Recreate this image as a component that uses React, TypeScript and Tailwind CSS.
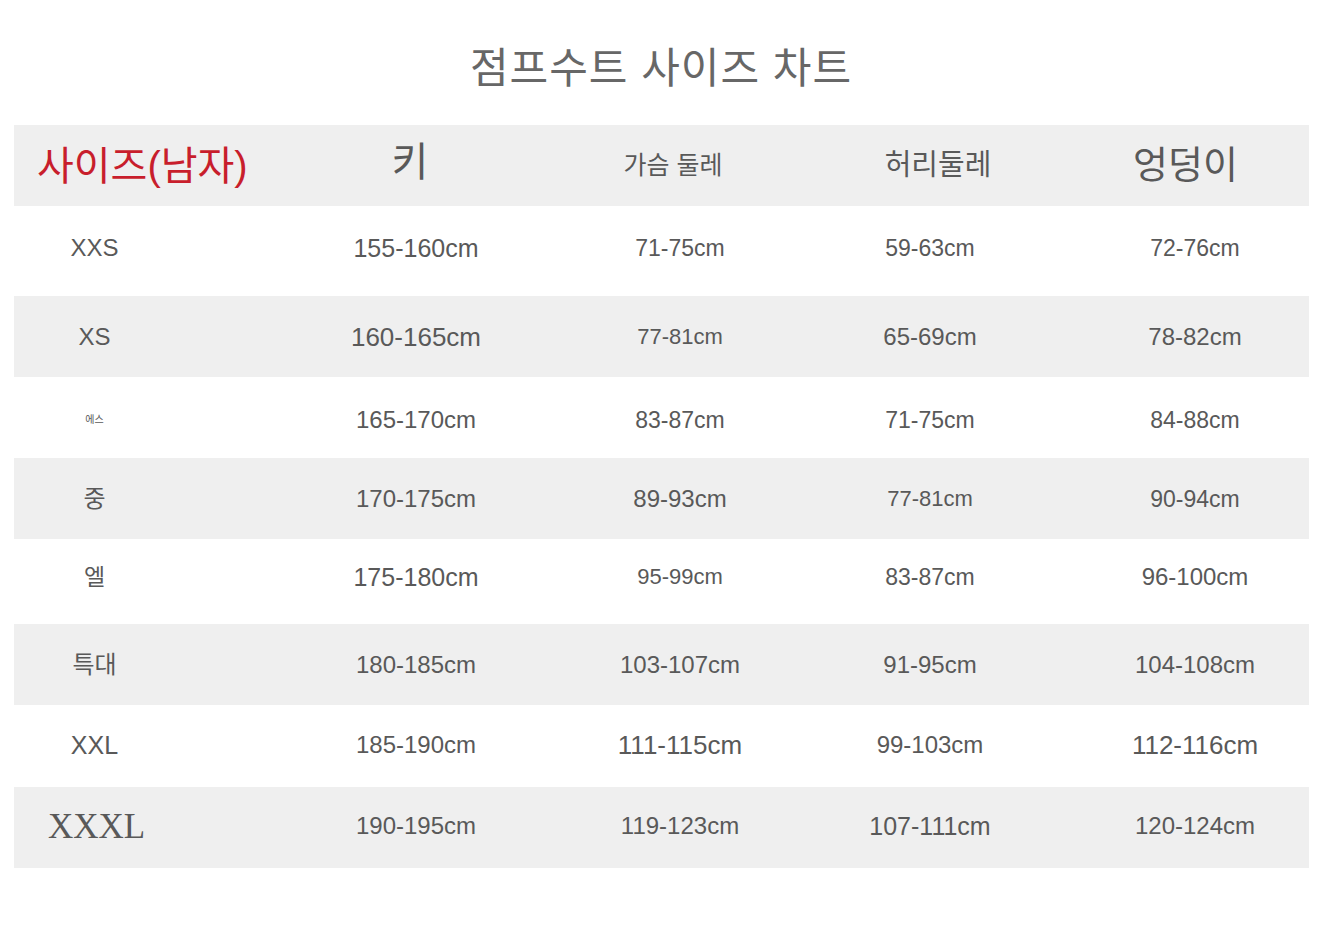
const font = { fontFamily: '"Liberation Sans", "Noto Sans CJK KR", sans-serif' }

type Cell = { text: string; size: string; serif?: boolean }

const rows: { gray: boolean; h: string; nudge: string; cells: Cell[] }[] = [
  {
    gray: false,
    h: "h-[90px]",
    nudge: "pb-[6px]",
    cells: [
      { text: "XXS", size: "text-[24px]" },
      { text: "155-160cm", size: "text-[25px]" },
      { text: "71-75cm", size: "text-[23px]" },
      { text: "59-63cm", size: "text-[23px]" },
      { text: "72-76cm", size: "text-[23px]" },
    ],
  },
  {
    gray: true,
    h: "h-[81px]",
    nudge: "pt-[1px]",
    cells: [
      { text: "XS", size: "text-[24px]" },
      { text: "160-165cm", size: "text-[26px]" },
      { text: "77-81cm", size: "text-[22px]" },
      { text: "65-69cm", size: "text-[24px]" },
      { text: "78-82cm", size: "text-[24px]" },
    ],
  },
  {
    gray: false,
    h: "h-[81px]",
    nudge: "pt-[5px]",
    cells: [
      { text: "에스", size: "text-[10px]" },
      { text: "165-170cm", size: "text-[24px]" },
      { text: "83-87cm", size: "text-[23px]" },
      { text: "71-75cm", size: "text-[23px]" },
      { text: "84-88cm", size: "text-[23px]" },
    ],
  },
  {
    gray: true,
    h: "h-[81px]",
    nudge: "pt-[1px]",
    cells: [
      { text: "중", size: "text-[24px]" },
      { text: "170-175cm", size: "text-[24px]" },
      { text: "89-93cm", size: "text-[24px]" },
      { text: "77-81cm", size: "text-[22px]" },
      { text: "90-94cm", size: "text-[23px]" },
    ],
  },
  {
    gray: false,
    h: "h-[85px]",
    nudge: "pb-[9px]",
    cells: [
      { text: "엘", size: "text-[23px]" },
      { text: "175-180cm", size: "text-[25px]" },
      { text: "95-99cm", size: "text-[22px]" },
      { text: "83-87cm", size: "text-[23px]" },
      { text: "96-100cm", size: "text-[24px]" },
    ],
  },
  {
    gray: true,
    h: "h-[81px]",
    nudge: "",
    cells: [
      { text: "특대", size: "text-[24px]" },
      { text: "180-185cm", size: "text-[24px]" },
      { text: "103-107cm", size: "text-[24px]" },
      { text: "91-95cm", size: "text-[24px]" },
      { text: "104-108cm", size: "text-[24px]" },
    ],
  },
  {
    gray: false,
    h: "h-[82px]",
    nudge: "pb-[2px]",
    cells: [
      { text: "XXL", size: "text-[25px]" },
      { text: "185-190cm", size: "text-[24px]" },
      { text: "111-115cm", size: "text-[26px]" },
      { text: "99-103cm", size: "text-[24px]" },
      { text: "112-116cm", size: "text-[26px]" },
    ],
  },
  {
    gray: true,
    h: "h-[81px]",
    nudge: "pb-[3px]",
    cells: [
      { text: "XXXL", size: "text-[35px] pl-[4px]", serif: true },
      { text: "190-195cm", size: "text-[24px]" },
      { text: "119-123cm", size: "text-[24px]" },
      { text: "107-111cm", size: "text-[25px]" },
      { text: "120-124cm", size: "text-[24px]" },
    ],
  },
]

// horizontal nudges so each column centres where the chart puts it
const colPad = ["pr-[80px]", "pl-[29px]", "pl-[7px]", "pr-[7px]", "pl-[19px]"]

export default function App() {
  return (
    <div className="h-[927px] w-[1322px] bg-white text-[#595959]" style={font}>
      {/* Title */}
      <div className="flex h-[125px] justify-center pt-[41px]">
        <h1 className="text-[42px] leading-[56px] tracking-[1px] text-[#676767]">점프수트 사이즈 차트</h1>
      </div>

      <div className="mx-[14px] w-[1295px]">
        {/* Header */}
        <div className="grid h-[81px] grid-cols-[241px_293px_257px_257px_247px] items-center bg-[#efefef]">
          <div className="pl-[23px] text-[40px] leading-none text-[#c81e2c]">사이즈(남자)</div>
          <div className="flex justify-center pb-[8px] pl-[17px] text-[40px] leading-none">키</div>
          <div className="flex justify-center pr-[7px] text-[25px] leading-none">가슴 둘레</div>
          <div className="flex justify-center pl-[9px] text-[29px] leading-none">허리둘레</div>
          <div className="flex justify-center pb-[2px] text-[38px] leading-none">엉덩이</div>
        </div>

        {/* Rows */}
        {rows.map((row, i) => (
          <div
            key={i}
            className={`grid grid-cols-[241px_293px_257px_257px_247px] items-center ${row.h} ${row.nudge} ${row.gray ? "bg-[#efefef]" : "bg-white"}`}
          >
            {row.cells.map((cell, j) => (
              <div
                key={j}
                className={`flex justify-center leading-none ${colPad[j]} ${cell.size}`}
                style={cell.serif ? { fontFamily: '"Liberation Serif", serif' } : undefined}
              >
                {cell.text}
              </div>
            ))}
          </div>
        ))}
      </div>
    </div>
  )
}
